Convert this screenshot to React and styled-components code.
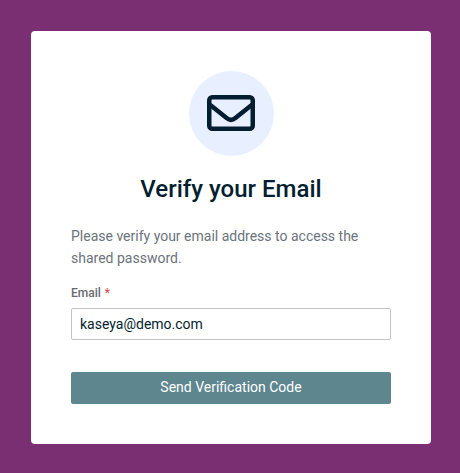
import React, { useState } from 'react'
import styled, { createGlobalStyle } from 'styled-components'

function App() {
  const [email, setEmail] = useState('kaseya@demo.com')
  return (
    <>
    <GlobalStyle />
    <Page>
      <Card>
        <IconCircle>
          <svg width='48' height='36' viewBox='0 0 48 36' fill='none' stroke='#021e30' strokeWidth='4.5'>
            <rect x='2.25' y='2.25' width='43.5' height='31.5' rx='3' />
            <path d='M3 9.8 L19.6 23 Q24 26.6 28.4 23 L45 9.8' />
          </svg>
        </IconCircle>
        <Title>Verify your Email</Title>
        <Message>Please verify your email address to access the shared password.</Message>
        <Label htmlFor='email'>Email <span>*</span></Label>
        <Input id='email' type='text' value={email} onChange={(e) => setEmail(e.target.value)} />
        <Button type='button'>Send Verification Code</Button>
      </Card>
    </Page>
    </>
  )
}

const GlobalStyle = createGlobalStyle`
*{
    box-sizing:border-box;
}
body{
    margin:0;
    background-color:#7b2f73;
    font-family:Roboto, sans-serif;
}
`
const Page = styled.div`
display:flex;
justify-content:center;
padding:31px 29px 29px 31px;
`
const Card = styled.div`
display:flex;
flex-direction:column;
width:400px;
height:413px;
padding:40px;
background-color:white;
border-radius:4px;
`
const IconCircle = styled.div`
display:flex;
align-items:center;
justify-content:center;
align-self:center;
flex-shrink:0;
width:85px;
height:85px;
padding:0 1px 1px 0;
border-radius:50%;
background-color:#e8f0ff;
`
const Title = styled.h1`
margin:17px 0 0;
font-size:24px;
line-height:32px;
font-weight:500;
text-align:center;
color:#021e30;
`
const Message = styled.p`
margin:20px 0 0;
font-size:14px;
line-height:22px;
color:#6b737c;
`
const Label = styled.label`
margin-top:16px;
font-size:12px;
line-height:16px;
font-weight:500;
color:#666a70;
span{
    margin-left:1px;
    font-weight:400;
    color:#d9453d;
}
`
const Input = styled.input`
flex-shrink:0;
height:32px;
margin-top:7px;
padding:0 8px;
border:1px solid #c4c4c4;
border-radius:2px;
outline:none;
font-family:inherit;
font-size:14px;
color:#021e30;
`
const Button = styled.button`
flex-shrink:0;
height:32px;
margin-top:32px;
padding:0 0 2px;
border:none;
border-radius:2px;
background-color:#5d868f;
font-family:inherit;
font-size:14px;
color:white;
`
export default App
